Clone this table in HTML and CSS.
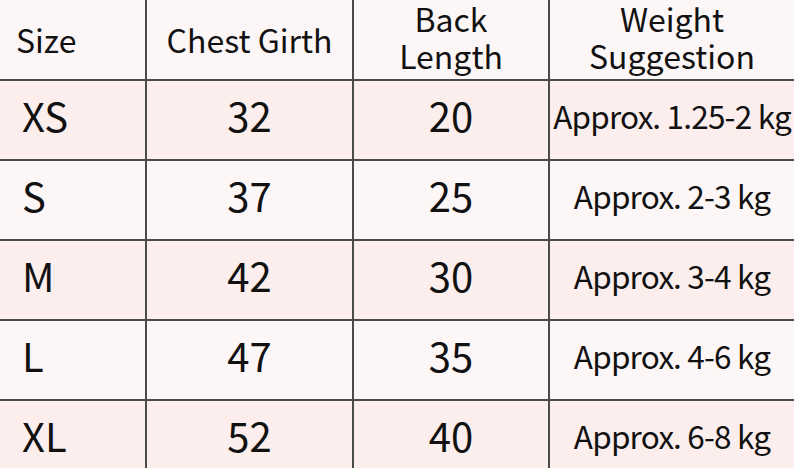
FILE: index.html
```html
<!DOCTYPE html>
<html>
<head>
<meta charset="utf-8">
<link rel="stylesheet" href="styles.css">
</head>
<body>
<div class="chart">
  <div class="cell head first">Size</div>
  <div class="cell head">Chest Girth</div>
  <div class="cell head two"><span>Back</span><span>Length</span></div>
  <div class="cell head two"><span>Weight</span><span>Suggestion</span></div>

  <div class="cell first pink">XS</div>
  <div class="cell pink">32</div>
  <div class="cell pink">20</div>
  <div class="cell pink wt">Approx. 1.25-2 kg</div>

  <div class="cell first">S</div>
  <div class="cell">37</div>
  <div class="cell">25</div>
  <div class="cell wt">Approx. 2-3 kg</div>

  <div class="cell first pink">M</div>
  <div class="cell pink">42</div>
  <div class="cell pink">30</div>
  <div class="cell pink wt">Approx. 3-4 kg</div>

  <div class="cell first">L</div>
  <div class="cell">47</div>
  <div class="cell">35</div>
  <div class="cell wt">Approx. 4-6 kg</div>

  <div class="cell first pink">XL</div>
  <div class="cell pink">52</div>
  <div class="cell pink">40</div>
  <div class="cell pink wt">Approx. 6-8 kg</div>
</div>
</body>
</html>
```

FILE: styles.css
```css
html, body {
  margin: 0;
  padding: 0;
  background: #fcf3f3;
}
body {
  width: 794px;
  height: 468px;
  overflow: hidden;
  font-family: "Noto Sans CJK SC", "Noto Sans", sans-serif;
  color: #111;
}
.chart {
  display: grid;
  grid-template-columns: 145px 205px 194px 244px;
  grid-template-rows: 79px repeat(5, 78px);
  gap: 2px;
  background: #4a4a4a;
  width: 794px;
}
.cell {
  background: #fdf6f6;
  display: flex;
  align-items: center;
  justify-content: center;
  text-align: center;
  font-size: 40px;
  line-height: 1;
  padding-bottom: 10px;
  box-sizing: border-box;
}
.cell.pink {
  background: #fbeeed;
}
.cell.first {
  justify-content: flex-start;
  padding-left: 22px;
}
.head {
  font-size: 32px;
  padding-bottom: 2px;
}
.head.first {
  padding-left: 16px;
}
.head.two {
  flex-direction: column;
  gap: 5px;
  padding-bottom: 6px;
}
.wt {
  font-size: 31.5px;
  letter-spacing: -0.8px;
  padding-bottom: 8px;
}
```
